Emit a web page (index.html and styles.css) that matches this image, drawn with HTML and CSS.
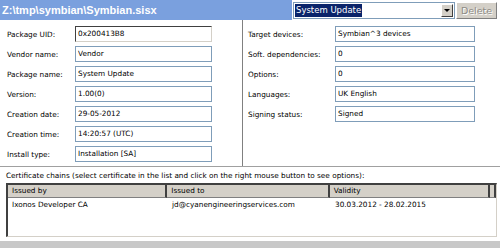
FILE: index.html
```html
<!DOCTYPE html>
<html lang="en">
<head>
    <meta charset="UTF-8" />
    <title>SIS Viewer</title>
    <link rel="stylesheet" href="styles.css">
</head>
<body>
    <div class="topbar">
        <div class="path">Z:\tmp\symbian\Symbian.sisx</div>
        <div class="combo">
            <span class="combo-value">System Update</span>
            <span class="combo-arrow"><span class="tri"></span></span>
        </div>
        <button class="delete" disabled>Delete</button>
    </div>

    <div class="details">
        <div class="column left">
            <div class="field"><span class="label">Package UID:</span><span class="edit sunken">0x200413B8</span></div>
            <div class="field"><span class="label">Vendor name:</span><span class="edit">Vendor</span></div>
            <div class="field"><span class="label">Package name:</span><span class="edit">System Update</span></div>
            <div class="field"><span class="label">Version:</span><span class="edit">1.00(0)</span></div>
            <div class="field"><span class="label">Creation date:</span><span class="edit">29-05-2012</span></div>
            <div class="field"><span class="label">Creation time:</span><span class="edit">14:20:57 (UTC)</span></div>
            <div class="field"><span class="label">Install type:</span><span class="edit">Installation [SA]</span></div>
        </div>
        <div class="column right">
            <div class="field"><span class="label">Target devices:</span><span class="edit">Symbian^3 devices</span></div>
            <div class="field"><span class="label">Soft. dependencies:</span><span class="edit">0</span></div>
            <div class="field"><span class="label">Options:</span><span class="edit">0</span></div>
            <div class="field"><span class="label">Languages:</span><span class="edit">UK English</span></div>
            <div class="field"><span class="label">Signing status:</span><span class="edit">Signed</span></div>
        </div>
    </div>

    <div class="certs">
        <div class="certs-caption">Certificate chains (select certificate in the list and click on the right mouse button to see options):</div>
        <div class="list">
            <div class="list-head">
                <span class="col c1">Issued by</span>
                <span class="col c2">Issued to</span>
                <span class="col c3">Validity</span>
                <span class="col c4"></span>
            </div>
            <div class="list-row">
                <span class="col c1">Ixonos Developer CA</span>
                <span class="col c2">jd@cyanengineeringservices.com</span>
                <span class="col c3">30.03.2012 - 28.02.2015</span>
            </div>
        </div>
    </div>

    <div class="statusbar"></div>
</body>
</html>
```

FILE: styles.css
```css
/* Basic reset */
* {
    margin: 0;
    padding: 0;
    box-sizing: border-box;
}

body {
    width: 500px;
    height: 248px;
    overflow: hidden;
    background-color: white;
    color: black;
    font-family: "DejaVu Sans", Verdana, sans-serif;
    font-size: 7.3px;
}

/* Top bar with file path, package combo and delete button */
.topbar {
    display: flex;
    align-items: center;
    height: 20px;
}

.path {
    width: 292px;
    height: 20px;
    line-height: 20px;
    padding-left: 2px;
    background-color: #7aa0de;
    color: white;
    font-family: "Liberation Sans", Arial, sans-serif;
    font-weight: bold;
    font-size: 11px;
}

.combo {
    display: flex;
    align-items: center;
    justify-content: space-between;
    width: 162px;
    height: 17px;
    margin-left: 1px;
    padding: 1px;
    border: 1px solid #7f9db9;
    background-color: white;
}

.combo-value {
    height: 13px;
    line-height: 13px;
    padding: 0 1px;
    background-color: #0a246a;
    color: white;
    font-size: 8.5px;
}

.combo-arrow {
    display: flex;
    align-items: center;
    justify-content: center;
    width: 12px;
    height: 13px;
    background-color: #d4d0c8;
    border: 1px solid;
    border-color: #ffffff #404040 #404040 #ffffff;
}

.tri {
    width: 0;
    height: 0;
    border-left: 3px solid transparent;
    border-right: 3px solid transparent;
    border-top: 3px solid black;
}

.delete {
    width: 41px;
    height: 17px;
    margin-left: 1px;
    padding: 0;
    background-color: #d4d0c8;
    border: 1px solid;
    border-color: #ffffff #808080 #808080 #ffffff;
    color: #8e8b84;
    text-shadow: 1px 1px 0 #ffffff;
    font-family: "DejaVu Sans", Verdana, sans-serif;
    font-size: 9.5px;
    text-align: center;
}

/* Details panels */
.details {
    display: flex;
    height: 147px;
    border-bottom: 1px solid #a0a0a0;
}

.column {
    display: flex;
    flex-direction: column;
    gap: 4px;
    padding-top: 6px;
}

.left {
    width: 243px;
    padding-left: 7px;
    border-right: 1px solid #808080;
}

.right {
    flex: 1;
    padding-left: 5px;
}

.field {
    display: flex;
    align-items: center;
    height: 16px;
}

.label {
    flex-shrink: 0;
}

.left .label {
    width: 68px;
}

.right .label {
    width: 87px;
}

.edit {
    height: 16px;
    line-height: 14px;
    padding-left: 2px;
    border: 1px solid #7f9db9;
    background-color: white;
    white-space: nowrap;
}

.left .edit {
    width: 137px;
}

.right .edit {
    width: 140px;
}

.edit.sunken {
    border-color: #404040 #d4d0c8 #d4d0c8 #404040;
}

/* Certificate list */
.certs {
    padding: 0 3px 0 6px;
}

.certs-caption {
    height: 16px;
    line-height: 16px;
    padding-top: 1px;
}

.list {
    height: 54px;
    border: 1px solid;
    border-width: 2px 1px 1px 2px;
    border-color: #404040 #d4d0c8 #d4d0c8 #404040;
}

.list-head,
.list-row {
    display: flex;
}

.list-head .col {
    height: 13px;
    line-height: 12px;
    background-color: #d4d0c8;
    border-right: 2px solid #404040;
    border-bottom: 1px solid #808080;
}

.list-row .col {
    height: 14px;
    line-height: 14px;
}

.col {
    padding-left: 4px;
    white-space: nowrap;
}

.c1 {
    width: 160px;
}

.c2 {
    width: 163px;
}

.c3 {
    width: 161px;
}

.list-head .c4 {
    flex: 1;
}

.statusbar {
    height: 7px;
    margin-top: 4px;
    background-color: #c8c8c8;
}
```
